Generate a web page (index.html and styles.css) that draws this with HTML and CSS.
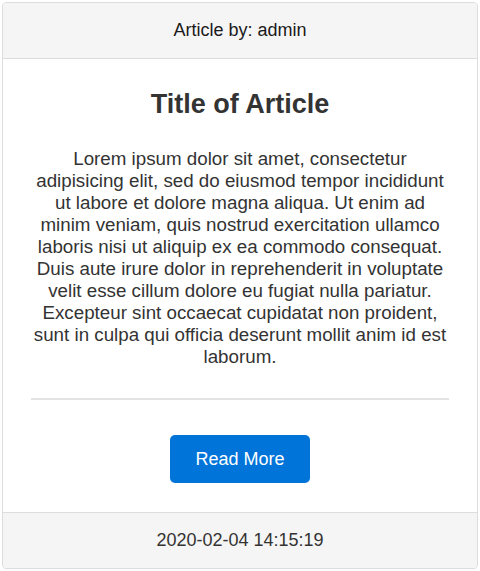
FILE: index.html
```html
<!DOCTYPE html>
<html lang="en">
<head>
    <meta charset="UTF-8">
    <meta name="viewport" content="width=device-width, initial-scale=1.0">
    <title>Article</title>
    <link rel="stylesheet" href="styles.css">
</head>
<body>

    <div class="card">
        <div class="card-header">Article by: admin</div>
        <div class="card-body">
            <h2>Title of Article</h2>
            <p>Lorem ipsum dolor sit amet, consectetur adipisicing elit, sed do eiusmod tempor incididunt ut labore et dolore magna aliqua. Ut enim ad minim veniam, quis nostrud exercitation ullamco laboris nisi ut aliquip ex ea commodo consequat. Duis aute irure dolor in reprehenderit in voluptate velit esse cillum dolore eu fugiat nulla pariatur. Excepteur sint occaecat cupidatat non proident, sunt in culpa qui officia deserunt mollit anim id est laborum.</p>
            <hr>
            <button>Read More</button>
        </div>
        <div class="card-footer">2020-02-04 14:15:19</div>
    </div>

</body>
</html>
```

FILE: styles.css
```css
body {
    font-family: "Liberation Sans", Arial, sans-serif;
    margin: 2px;
    color: #333;
}

.card {
    border: 1px solid #ddd;
    border-radius: 4px;
    text-align: center;
    overflow: hidden;
}

.card-header,
.card-footer {
    background: #f5f5f5;
    font-size: 18px;
    line-height: 21px;
    color: #1a1a1a;
    padding: 17px 10px;
}

.card-header { border-bottom: 1px solid #ddd; }
.card-footer { border-top: 1px solid #ddd; color: #333; }

.card-body {
    padding: 30px 28px 29px;
}

.card-body h2 {
    margin: 0 0 29px;
    font-size: 27px;
    line-height: 30px;
    color: #333;
}

.card-body p {
    margin: 0;
    font-size: 18.75px;
    line-height: 22px;
}

hr {
    border: none;
    border-top: 2px solid #e3e3e3;
    margin: 30px 0 35px;
}

button {
    background: #0074d9;
    color: white;
    border: none;
    border-radius: 5px;
    font-family: inherit;
    font-size: 18px;
    line-height: 20px;
    padding: 14px 25px;
    cursor: pointer;
}
```
